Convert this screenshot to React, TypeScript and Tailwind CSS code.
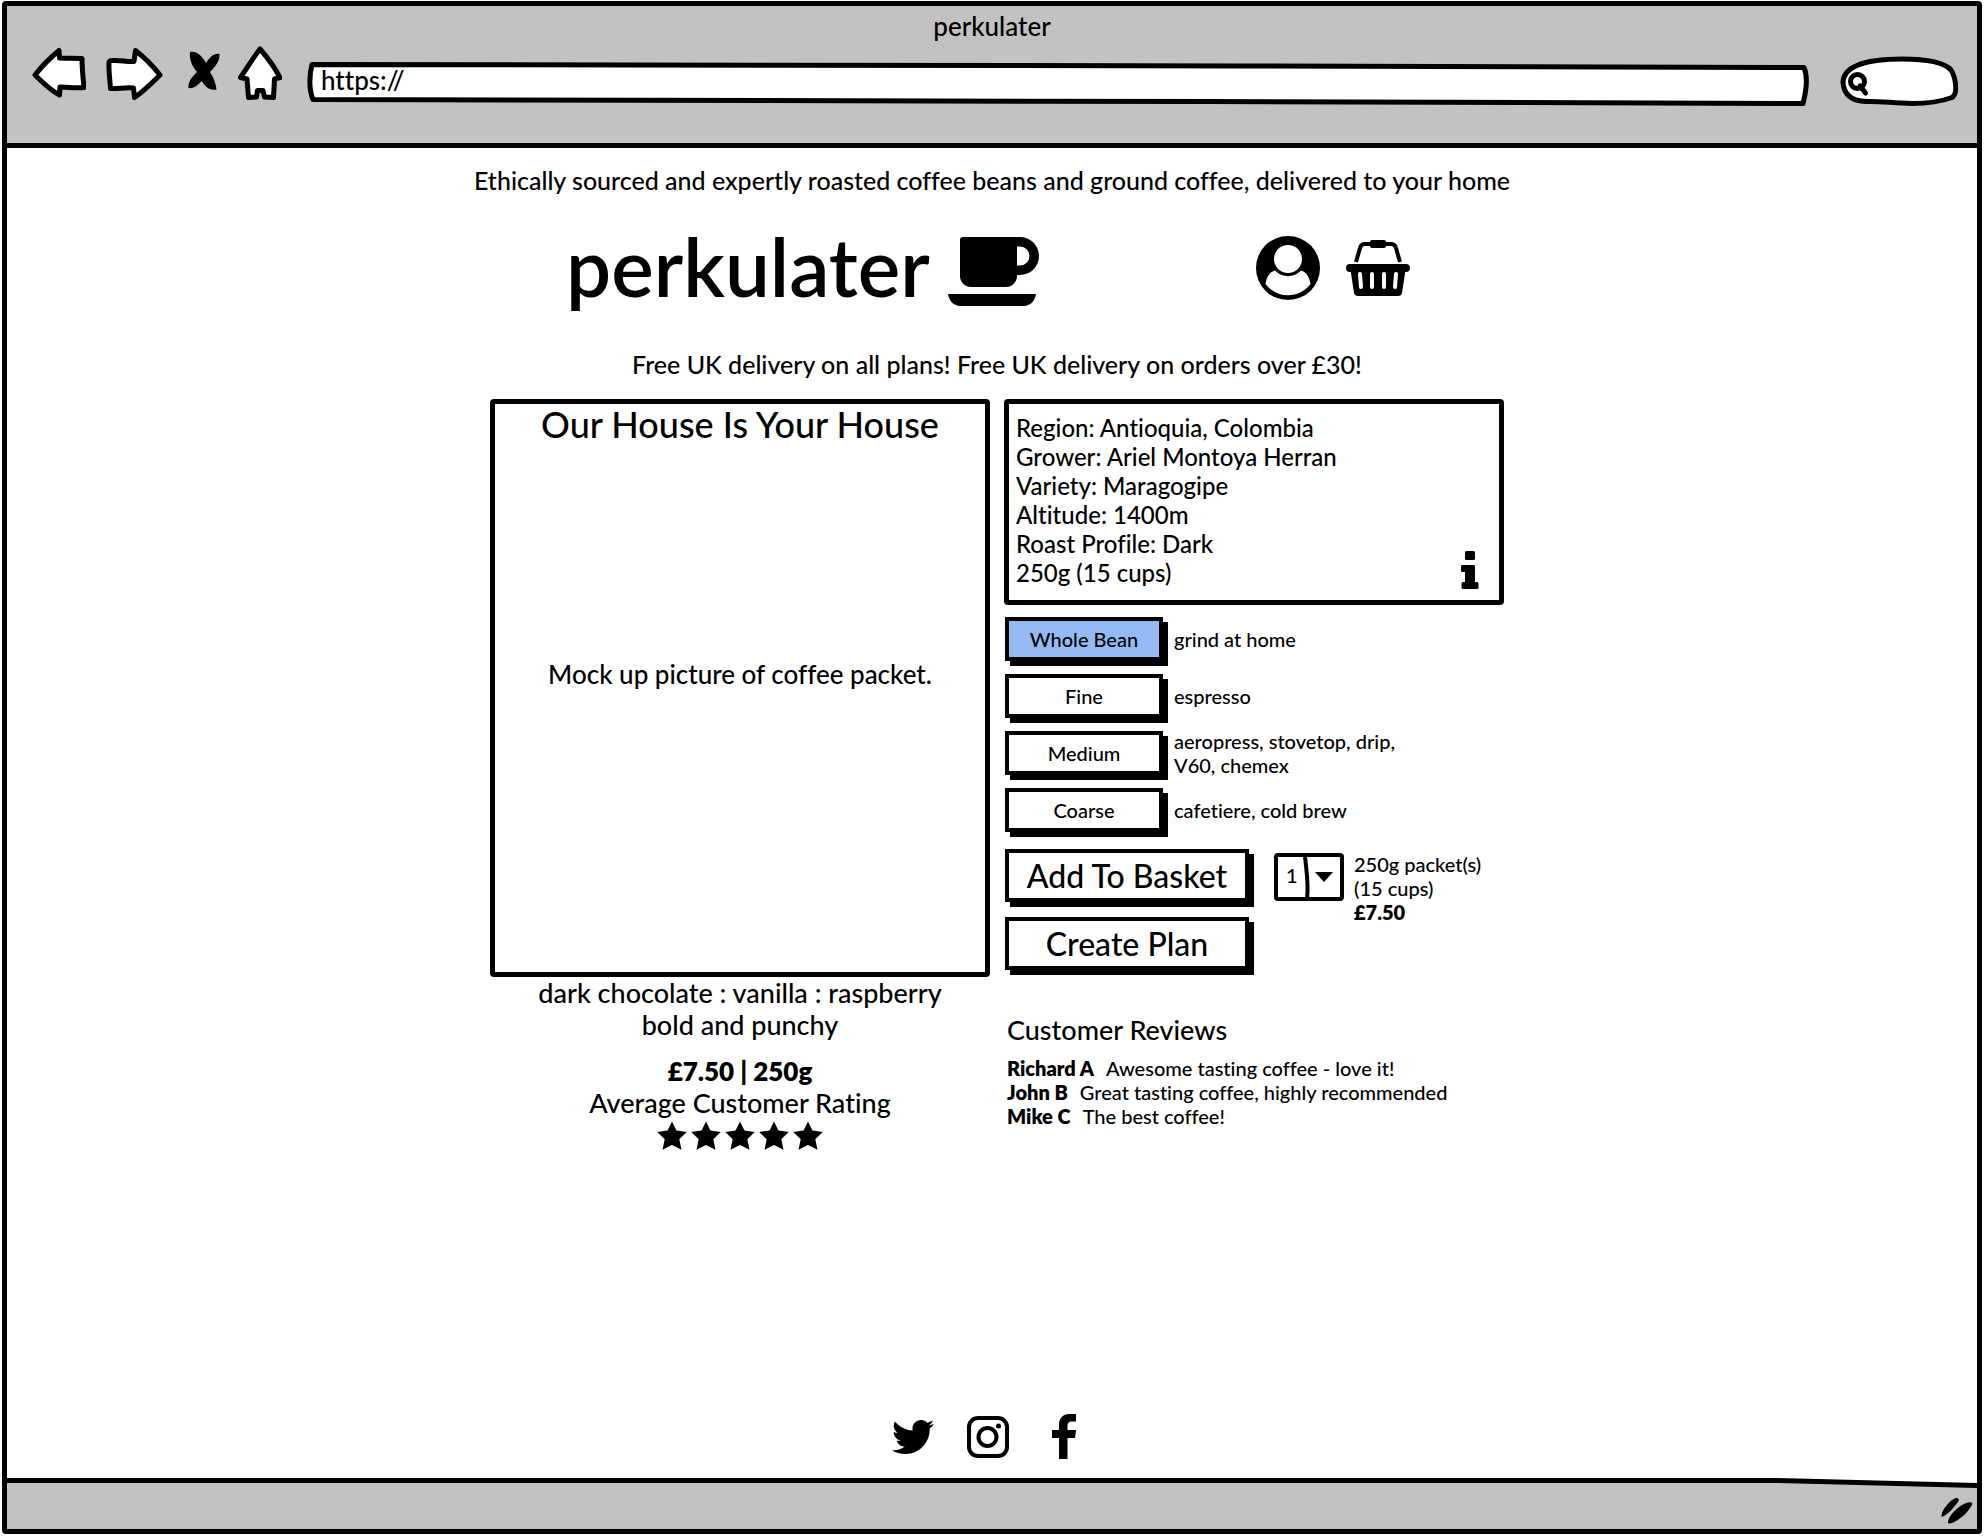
import { useState } from "react";
import type { ReactNode } from "react";
import { FaTwitter } from "react-icons/fa";

const outline = {
  fill: "white",
  stroke: "black",
  strokeWidth: 5,
  strokeLinejoin: "round" as const,
  strokeLinecap: "round" as const,
};

function BackIcon() {
  return (
    <svg width="54" height="54" viewBox="0 0 54 54" aria-hidden="true">
      <path {...outline} d="M3 29C10 20 18 12 27 4.500L27.500 12C36 12.500 44 12 50 12.500C50 22 51 32 52 41.500C44 42.500 36 41 28 41L27.500 49C18 44 10 36 3 29Z" />
    </svg>
  );
}

function ForwardIcon() {
  return (
    <svg width="57" height="54" viewBox="0 0 57 54" aria-hidden="true">
      <path {...outline} d="M3 17C3 14 6 14.500 10 14.500C16 14.500 22 16 28 15.500L29.500 4.500C39 12 47 20 54 29C46 37 38 45 28.500 51.500L27.500 42C20 41 12 43 4.500 42.500C4 34 2.500 25 3 17Z" />
    </svg>
  );
}

function StopIcon() {
  return (
    <svg width="32" height="54" viewBox="0 0 32 54" aria-hidden="true">
      <path d="M2 6C9 5 14 10 18 17C22 11 26 7 31.500 8C32 15 27 21 22 26C26 32 28 38 28.500 43.500C21 45 17 40 13.500 35C10 39 6 43 .5 42C0 35 4 31 9 26C4 20 1 13 2 6Z" />
    </svg>
  );
}

function HomeIcon() {
  return (
    <svg width="44" height="54" viewBox="0 0 44 54" aria-hidden="true">
      <path {...outline} d="M22 3C15 12 9 22 2.500 31.500L9 33L10.500 51.500L18.500 51L19.500 44.500H25L26.500 51L35.500 51.500L36.500 33L42 31.500C37 22 29 11 22 3Z" />
    </svg>
  );
}

function CupIcon() {
  return (
    <svg width="91" height="69" viewBox="0 0 91 69" className="shrink-0" aria-hidden="true">
      <path fillRule="evenodd" d="M15 0H72A19 19 0 0 1 72 38H69V39A11 11 0 0 1 58 50H23A11 11 0 0 1 12 39V3A3 3 0 0 1 15 0ZM69 9.500V28.500H72A9.500 9.500 0 0 0 72 9.500Z" />
      <path d="M0 57H88C87 64 82 69 76 69H12C6 69 1 64 0 57Z" />
    </svg>
  );
}

function UserIcon() {
  return (
    <svg width="64" height="64" viewBox="0 0 64 64" aria-hidden="true">
      <circle cx="32" cy="32" r="32" />
      <circle cx="32" cy="23" r="14" fill="white" />
      <path fill="white" d="M19 34.500C13 36 10.500 42 9.500 48C21 63 43 63 54.500 48C53.500 42 51 36 45 34.500C38 42 26 42 19 34.500Z" />
    </svg>
  );
}

function BasketIcon() {
  return (
    <svg width="64" height="56" viewBox="0 0 64 56" aria-hidden="true">
      <path fill="none" stroke="black" strokeWidth="4" d="M10 22L14 8Q15 4 19 4H45Q49 4 50 8L54 22" />
      <rect x="24" y="0" width="16" height="8" rx="2" />
      <rect x="0" y="24" width="64" height="8" rx="4" />
      <path d="M4.500 30H59.500L56 53Q55.500 56 52 56H12Q8.500 56 8 53Z" />
      <path fill="none" stroke="white" strokeWidth="4" strokeLinecap="round" d="M14 34L15 47M26 34V47M38 34V47M50 34L49 47" />
    </svg>
  );
}

function InfoIcon() {
  return (
    <svg width="18" height="38" viewBox="0 0 18 38" aria-hidden="true">
      <rect x="4" y="0" width="10" height="9" rx="1.500" />
      <path d="M1.500 14H12.500Q14 14 14 15.500V31H16Q17.500 31 17.500 32.500V36.500Q17.500 38 16 38H2Q.5 38 .5 36.500V32.500Q.5 31 2 31H4V21H1.500Q0 21 0 19.500V15.500Q0 14 1.500 14Z" />
    </svg>
  );
}

function StarIcon() {
  return (
    <svg width="30" height="30" viewBox="0 0 30 30" aria-hidden="true">
      <path d="M15 .5L19.500 9.500L29.800 11L22.300 18.300L24.500 28.800L15 24L5.500 28.800L7.700 18.300L.2 11L10.500 9.500Z" />
    </svg>
  );
}

function InstagramIcon() {
  return (
    <svg width="42" height="42" viewBox="0 0 42 42" aria-hidden="true">
      <rect x="2" y="2" width="38" height="38" rx="9" fill="none" stroke="black" strokeWidth="4" />
      <circle cx="20.500" cy="21" r="9" fill="none" stroke="black" strokeWidth="4" />
      <circle cx="31.500" cy="10" r="2.500" />
    </svg>
  );
}

function FacebookIcon() {
  return (
    <svg width="24" height="45" viewBox="0 0 24 45" aria-hidden="true">
      <path d="M24 0V7.500H20C16.500 7.500 15.500 9 15.500 12V16H24L23 24H15.500V45H7V24H0V16H7V11C7 4 11 0 17 0Z" />
    </svg>
  );
}

function ShadowButton({
  children,
  className,
  pressed,
  onClick,
}: {
  children: ReactNode;
  className: string;
  pressed?: boolean;
  onClick?: () => void;
}) {
  return (
    <button
      type="button"
      aria-pressed={pressed}
      onClick={onClick}
      className={`shrink-0 border-4 border-black shadow-[5px_5px_0_#000] ${pressed ? "bg-[#95baf3]" : "bg-white"} ${className}`}
    >
      {children}
    </button>
  );
}

const facts = [
  "Region: Antioquia, Colombia",
  "Grower: Ariel Montoya Herran",
  "Variety: Maragogipe",
  "Altitude: 1400m",
  "Roast Profile: Dark",
  "250g (15 cups)",
];

const grinds = [
  { name: "Whole Bean", use: "grind at home" },
  { name: "Fine", use: "espresso" },
  { name: "Medium", use: "aeropress, stovetop, drip, V60, chemex" },
  { name: "Coarse", use: "cafetiere, cold brew" },
];

const reviews = [
  { who: "Richard A", text: "Awesome tasting coffee - love it!" },
  { who: "John B", text: "Great tasting coffee, highly recommended" },
  { who: "Mike C", text: "The best coffee!" },
];

function BrowserBar() {
  return (
    <header className="h-[142px] border-b-5 border-black bg-[#c2c2c2] pt-[5px]">
      <p className="text-center text-[26px] leading-[30px]">perkulater</p>
      <div className="mt-[5px] flex h-[60px] items-end pr-[19px] pl-[25px]">
        <nav className="flex shrink-0 self-start" aria-label="Browser">
          <button type="button" aria-label="Back"><BackIcon /></button>
          <button type="button" aria-label="Forward" className="ml-5"><ForwardIcon /></button>
          <button type="button" aria-label="Stop" className="ml-[25px]"><StopIcon /></button>
          <button type="button" aria-label="Home" className="ml-[18px]"><HomeIcon /></button>
        </nav>
        <div className="relative ml-[25px] h-11 flex-1">
          <svg className="absolute inset-0 h-full w-full" viewBox="0 0 1503 44" preserveAspectRatio="none" aria-hidden="true">
            <path {...outline} vectorEffect="non-scaling-stroke" d="M5 2.500C500 2.500 1000 4 1497 5.500C1501 15 1499 30 1496 41.500C1000 40 500 38 6 37.500C2 28 2 14 5 2.500Z" />
          </svg>
          <input aria-label="Address" defaultValue="https://" className="relative h-9 w-full bg-transparent px-3.5 text-[26px] outline-none" />
        </div>
        <div className="relative ml-[30px] h-[50px] w-[118px] shrink-0">
          <svg className="absolute inset-0" width="118" height="50" viewBox="0 0 118 50" aria-hidden="true">
            <path {...outline} d="M3 27C3 9 30 3 62 3C90 3 105 7 111 14C116 22 118 38 112 41.500C100 46 88 47.500 72 47.500C52 47 40 45 26 45.500C10 45 4 37 3 27Z" />
            <circle cx="17.500" cy="25.500" r="7" fill="none" stroke="black" strokeWidth="5" />
            <path stroke="black" strokeWidth="5" strokeLinecap="round" d="M20 30L25.500 37" />
          </svg>
          <input type="search" aria-label="Search" className="relative h-full w-full bg-transparent pr-4 pl-8 text-xl outline-none" />
        </div>
      </div>
    </header>
  );
}

function ProductCard() {
  return (
    <section className="flex flex-col items-center text-center text-[27px] leading-8">
      <div className="flex h-[578px] w-full flex-col rounded-sm border-5 border-black pb-[68px]">
        <h2 className="text-[36px] leading-10">Our House Is Your House</h2>
        <div className="flex flex-1 items-center justify-center text-[26px]">Mock up picture of coffee packet.</div>
      </div>
      <p>dark chocolate : vanilla : raspberry</p>
      <p>bold and punchy</p>
      <p className="mt-3.5 text-[26px] font-extrabold">£7.50 | 250g</p>
      <p>Average Customer Rating</p>
      <div className="mt-0.5 flex gap-1" role="img" aria-label="5 out of 5 stars">
        {[1, 2, 3, 4, 5].map((n) => (
          <StarIcon key={n} />
        ))}
      </div>
    </section>
  );
}

function PurchasePanel() {
  const [grind, setGrind] = useState("Whole Bean");
  return (
    <section className="text-xl leading-6">
      <div className="flex h-[206px] items-end justify-between rounded-sm border-5 border-black pr-5 pb-[11px] pl-[7px]">
        <ul className="pb-0.5 text-2xl leading-[29px]">
          {facts.map((fact) => (
            <li key={fact}>{fact}</li>
          ))}
        </ul>
        <button type="button" aria-label="More information"><InfoIcon /></button>
      </div>

      <div className="mt-3 flex flex-col gap-[13px] pl-px">
        {grinds.map((g) => (
          <div key={g.name} className="flex h-11 items-center gap-[11px]">
            <ShadowButton className="h-11 w-[158px]" pressed={grind === g.name} onClick={() => setGrind(g.name)}>
              {g.name}
            </ShadowButton>
            <p className="max-w-[250px]">{g.use}</p>
          </div>
        ))}
      </div>

      <div className="mt-[17px] flex items-start pl-px">
        <div className="flex flex-col gap-[15px]">
          <ShadowButton className="h-[53px] w-[244px] text-[32px]">Add To Basket</ShadowButton>
          <ShadowButton className="h-[53px] w-[244px] text-[32px]">Create Plan</ShadowButton>
        </div>
        <div className="relative mt-1 ml-[25px] h-12 w-[70px] shrink-0">
          <select aria-label="Quantity" defaultValue="1" className="h-full w-full appearance-none rounded-sm border-4 border-black bg-white pb-1 pl-2 outline-none">
            <option>1</option>
            <option>2</option>
            <option>3</option>
          </select>
          <svg className="pointer-events-none absolute inset-0" width="70" height="48" viewBox="0 0 70 48" aria-hidden="true">
            <path fill="none" stroke="black" strokeWidth="4" d="M31 3C32 16 35 30 33 46" />
            <path d="M41 19H59L50 29Z" />
          </svg>
        </div>
        <p className="mt-[3px] ml-2.5">
          250g packet(s)
          <br />
          (15 cups)
          <br />
          <b className="font-extrabold">£7.50</b>
        </p>
      </div>

      <h2 className="mt-11 pl-[3px] text-[27px] leading-8">Customer Reviews</h2>
      <ul className="mt-2.5 pl-[3px]">
        {reviews.map((r) => (
          <li key={r.who}>
            <b className="mr-3 font-extrabold">{r.who}</b>
            {r.text}
          </li>
        ))}
      </ul>
    </section>
  );
}

export default function App() {
  return (
    <div className="flex min-h-screen flex-col bg-white px-0.5 pt-px pb-0.5 font-['Lato',sans-serif] font-medium text-black [font-variant-ligatures:none]">
      <div className="flex flex-1 flex-col rounded-sm border-5 border-black">
        <BrowserBar />
        <main className="mx-auto flex w-full max-w-[1024px] flex-1 flex-col pt-[17px]">
          <p className="-mx-4 text-center text-[25px] leading-[30px]">
            Ethically sourced and expertly roasted coffee beans and ground coffee, delivered to your home
          </p>
          <div className="mt-[31px] flex items-center justify-between pr-[94px] pl-[86px]">
            <div className="flex items-end gap-[18px]">
              <h1 className="text-[80px] leading-[80px] font-semibold">perkulater</h1>
              <CupIcon />
            </div>
            <div className="flex items-center gap-[26px] pt-1">
              <a href="#account" aria-label="Account"><UserIcon /></a>
              <a href="#basket" aria-label="Basket"><BasketIcon /></a>
            </div>
          </div>
          <p className="mt-[43px] pl-2.5 text-center text-[25px] leading-[30px]">
            Free UK delivery on all plans! Free UK delivery on orders over £30!
          </p>
          <div className="mt-5 grid grid-cols-2 gap-3.5 pl-2.5">
            <ProductCard />
            <PurchasePanel />
          </div>
          <div className="mt-auto flex items-center justify-center pr-4 pb-[19px]">
            <a href="#twitter" aria-label="Twitter"><FaTwitter className="size-[42px]" /></a>
            <a href="#instagram" aria-label="Instagram" className="ml-[33px]"><InstagramIcon /></a>
            <a href="#facebook" aria-label="Facebook" className="ml-[43px]"><FacebookIcon /></a>
          </div>
        </main>
        <footer className="relative flex h-[51px] items-center justify-end bg-[#c2c2c2] pr-1">
          <svg className="absolute inset-x-0 top-0 h-3 w-full" viewBox="0 0 1970 12" preserveAspectRatio="none" aria-hidden="true">
            <path fill="white" d="M0 0H1970V7L1770 2.500H0Z" />
            <path fill="none" stroke="black" strokeWidth="5" d="M0 2.500H1770L1970 7.500" />
          </svg>
          <svg width="32" height="27" viewBox="0 0 32 27" className="mt-4" aria-hidden="true">
            <path d="M.5 19C0 12 9 2 15 0C18 0 18.500 2 17 4C13 9 7 17 .5 19ZM7 24C8 16 20 6 27 4.500C31 4 32 5 31 7C26 16 16 24 9 25.500Q7 26 7 24Z" />
          </svg>
        </footer>
      </div>
    </div>
  );
}
